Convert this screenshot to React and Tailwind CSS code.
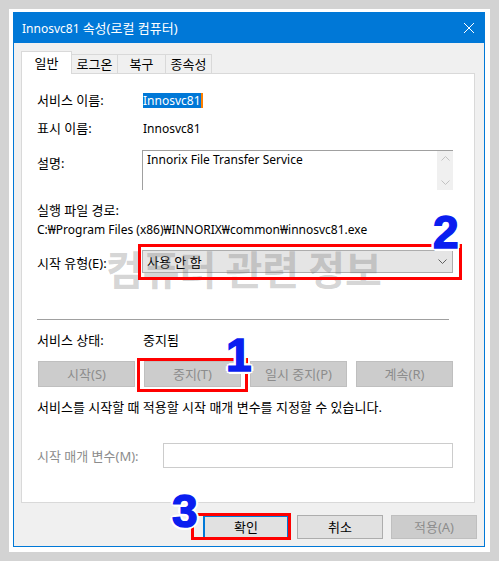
import React from 'react';

const font = { fontFamily: '"Noto Sans", "Noto Sans CJK KR", sans-serif' };

const Chevron = ({ up, className }) => (
  <svg width="9" height="5" viewBox="0 0 9 5" className={className}>
    <path d={up ? 'M0.5 4.5 L4.5 0.5 L8.5 4.5' : 'M0.5 0.5 L4.5 4.5 L8.5 0.5'} fill="none" stroke="currentColor" strokeWidth="1" />
  </svg>
);

const Btn = ({ children, disabled, focused, className = '' }) => (
  <div
    className={
      'flex items-center justify-center ' +
      (disabled
        ? 'bg-[#cccccc] border border-[#bfbfbf] text-[#8c8c8c] '
        : focused
        ? 'bg-[#e1e1e1] border-2 border-[#0078d7] text-black '
        : 'bg-[#e1e1e1] border border-[#adadad] text-black ') +
      className
    }
  >
    {children}
  </div>
);

const Row = ({ label, children, className = '' }) => (
  <div className={'flex items-center h-[16px] ' + className}>
    <div className="w-[105px] shrink-0">{label}</div>
    <div className="pl-px">{children}</div>
  </div>
);

const Mark = ({ n, className }) => (
  <div
    className={
      'absolute leading-none text-[46px] font-bold text-[#0a1ef0] [-webkit-text-stroke:1.5px_#0a1ef0] [text-shadow:-2px_-2px_0_#fff,2px_-2px_0_#fff,-2px_2px_0_#fff,2px_2px_0_#fff,0_3px_0_#fff,0_-3px_0_#fff,3px_0_0_#fff,-3px_0_0_#fff] ' +
      className
    }
    style={{ fontFamily: '"Liberation Sans", Arial, sans-serif' }}
  >
    {n}
  </div>
);

export default function App() {
  return (
    <div className="relative w-[499px] h-[561px] bg-[#d3d3d3] p-[9px] overflow-hidden text-[13px] leading-[16px] text-black" style={font}>
      <div className="w-[481px] h-[543px] bg-white pt-[3px] pl-[4px] pr-[5px] pb-[5px]">
        {/* window */}
        <div className="flex flex-col h-full border border-[#0078d7]">
          <div className="h-[30px] shrink-0 bg-[#0078d7] flex items-center justify-between pl-[8px] pr-[10px] text-white">
            <span className="whitespace-nowrap">
              <span className="text-[12px]">Innosvc81 </span>속성(로컬 컴퓨터)
            </span>
            <svg width="10" height="10" viewBox="0 0 10 10">
              <path d="M0 0 L10 10 M10 0 L0 10" stroke="#fff" strokeWidth="1" />
            </svg>
          </div>

          <div className="flex-1 bg-[#f0f0f0] pt-[8px] pl-[7px] pr-[9px]">
            {/* tabs */}
            <div className="flex items-start h-[22px]">
              <div className="relative z-10 w-[51px] h-[23px] bg-white border-t border-l border-r border-[#d9d9d9] flex items-center justify-center">
                일반
              </div>
              <div className="mt-[3px] w-[46px] h-[19px] border-t border-r border-[#d9d9d9] flex items-center justify-center">로그온</div>
              <div className="mt-[3px] w-[48px] h-[19px] border-t border-r border-[#d9d9d9] flex items-center justify-center">복구</div>
              <div className="mt-[3px] w-[46px] h-[19px] border-t border-r border-[#d9d9d9] flex items-center justify-center">종속성</div>
            </div>

            {/* panel */}
            <div className="h-[430px] bg-white border border-[#d9d9d9] pl-[15px] pr-[21px] pt-[18px]">
              <Row label="서비스 이름:">
                <span className="inline-flex items-center text-[12px]">
                  <span className="bg-[#0078d7] text-white h-[15px] leading-[15px]">Innosvc81</span>
                  <span className="w-[2px] h-[15px] bg-[#ff8000]" />
                </span>
              </Row>
              <Row label="표시 이름:" className="mt-[12px]">
                <span className="text-[12px]">Innosvc81</span>
              </Row>

              <div className="flex items-start mt-[14px]">
                <div className="w-[105px] shrink-0 mt-[5px] h-[16px]">설명:</div>
                <div className="w-[311px] h-[40px] flex border-t border-l border-[#a0a0a0]">
                  <div className="flex-1 pl-[4px] pt-px text-[12px]">Innorix File Transfer Service</div>
                  <div className="w-[16px] bg-[#f0f0f0] flex flex-col items-center justify-between py-[5px] text-[#c2c2c2]">
                    <Chevron up />
                    <Chevron />
                  </div>
                </div>
              </div>

              <div className="h-[16px] mt-[12px]">실행 파일 경로:</div>
              <div className="h-[16px] mt-[4px] whitespace-nowrap text-[12px]">C:₩Program Files (x86)₩INNORIX₩common₩innosvc81.exe</div>

              <div className="flex items-center h-[23px] mt-[12px]">
                <div className="w-[105px] shrink-0 mt-[2px]">시작 유형(E):</div>
                <div className="w-[311px] h-[23px] bg-[#e5e5e5] border border-[#adadad] flex items-center justify-between pl-[4px] pr-[5px]">
                  <span>사용 안 함</span>
                  <Chevron className="text-[#606060]" />
                </div>
              </div>

              <div className="mt-[46px] h-px w-[412px] bg-[#a0a0a0]" />

              <Row label="서비스 상태:" className="mt-[12px]">중지됨</Row>

              <div className="mt-[13px] ml-px w-[415px] h-[26px] grid grid-cols-4 gap-[9px]">
                <Btn disabled>시작(S)</Btn>
                <Btn disabled>중지(T)</Btn>
                <Btn disabled>일시 중지(P)</Btn>
                <Btn disabled>계속(R)</Btn>
              </div>

              <div className="h-[16px] mt-[12px] whitespace-nowrap">서비스를 시작할 때 적용할 시작 매개 변수를 지정할 수 있습니다.</div>

              <div className="flex items-center h-[25px] mt-[28px]">
                <div className="w-[126px] shrink-0 text-[#8c8c8c]">시작 매개 변수(M):</div>
                <div className="flex-1 h-[25px] bg-white border border-[#cccccc]" />
              </div>
            </div>

            {/* dialog buttons */}
            <div className="mt-[12px] -mr-[2px] flex justify-end gap-[8px]">
              <Btn focused className="w-[86px] h-[24px]">확인</Btn>
              <Btn className="w-[86px] h-[24px]">취소</Btn>
              <Btn disabled className="w-[86px] h-[24px]">적용(A)</Btn>
            </div>
          </div>
        </div>
      </div>

      {/* watermark */}
      <div className="absolute left-[106px] top-[248px] text-[40px] leading-[40px] font-bold whitespace-nowrap text-[rgba(110,110,110,0.3)] pointer-events-none" style={{ fontFamily: '"Noto Sans CJK KR", sans-serif' }}>
        컴퓨터 관련 정보
      </div>

      {/* annotations */}
      <div className="absolute left-[138px] top-[244px] w-[324px] h-[36px] border-[3px] border-[#ff0000]" />
      <div className="absolute left-[137px] top-[358px] w-[111px] h-[34px] border-[3px] border-[#ff0000]" />
      <div className="absolute left-[191px] top-[513px] w-[100px] h-[27px] border-[3px] border-[#ff0000]" />
      <Mark n="2" className="left-[433px] top-[209px]" />
      <Mark n="1" className="left-[226px] top-[332px]" />
      <Mark n="3" className="left-[172px] top-[488px]" />
    </div>
  );
}
